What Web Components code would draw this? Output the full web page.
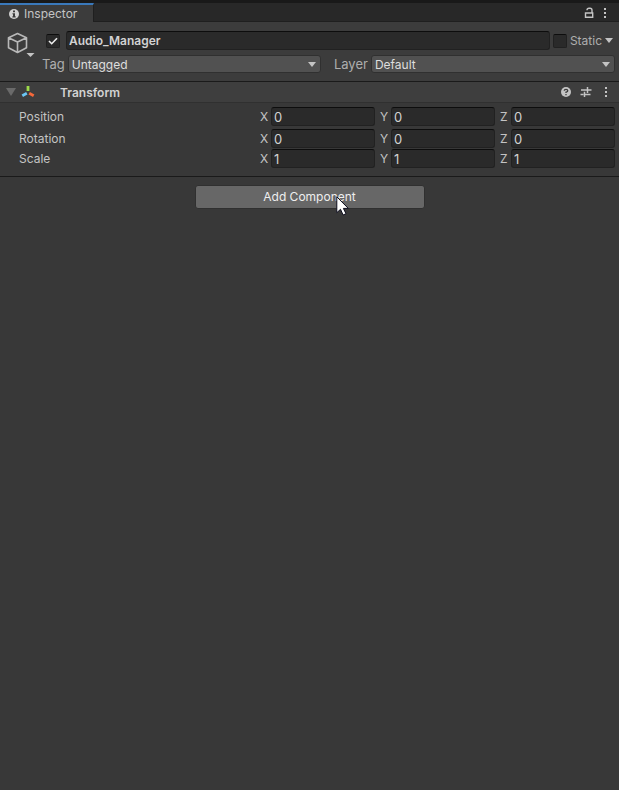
<!DOCTYPE html>
<html lang="en">
<head>
<meta charset="utf-8">
<meta name="viewport" content="width=device-width, initial-scale=1">
<title>Inspector</title>
<style>
    body {
        margin: 0;
        min-height: 100vh;
        background: #383838;
        color: #c4c4c4;
        font-family: Inter, "Liberation Sans", sans-serif;
        font-size: 12px;
        line-height: 18px;
    }
</style>
</head>
<body>
<inspector-panel>
    <inspector-tabs slot="tabs">Inspector</inspector-tabs>
    <object-header name="Audio_Manager" tag="Untagged" layer="Default"></object-header>
    <component-section heading="Transform">
        <vector-row x="0" y="0" z="0" spaced>Position</vector-row>
        <vector-row x="0" y="0" z="0">Rotation</vector-row>
        <vector-row x="1" y="1" z="1">Scale</vector-row>
    </component-section>
    <add-button>Add Component</add-button>
</inspector-panel>

<script>
//shared look of the text boxes
const fieldStyle = `
    input[type="text"] {
        box-sizing: border-box;
        flex: 1;
        min-width: 0;
        height: 19px;
        margin: 0;
        padding: 0 2px;
        border: 1px solid #212121;
        border-top-color: #0d0d0d;
        border-radius: 3px;
        outline: none;
        background: #2a2a2a;
        color: #d2d2d2;
        font: inherit;
    }
`;

const iconButtonStyle = `
    button {
        display: block;
        margin: 0;
        padding: 0;
        border: 0;
        background: none;
        color: inherit;
    }
    svg { display: block; }
`;

const moreIcon = `
    <svg width="4" height="12" viewBox="0 0 4 12" fill="#c4c4c4">
        <rect x="1" y="1" width="2" height="2"/><rect x="1" y="5" width="2" height="2"/><rect x="1" y="9" width="2" height="2"/>
    </svg>
`;

//THE WHOLE PANEL
class InspectorPanel extends HTMLElement {
    constructor() {
        super();
        this.attachShadow({ mode: "open" }).innerHTML = `
            <slot name="tabs"></slot>
            <main><slot></slot></main>
            <style>
                :host { display: block; }
                main { display: flex; flex-direction: column; }
            </style>
        `;
    }
}
customElements.define("inspector-panel", InspectorPanel);

//TAB BAR
class InspectorTabs extends HTMLElement {
    constructor() {
        super();
        this.attachShadow({ mode: "open" }).innerHTML = `
            <button class="tab">
                <svg width="10" height="10" viewBox="0 0 10 10">
                    <circle cx="5" cy="5" r="5" fill="#d2d2d2"/>
                    <path d="M4 1.5h2v1.7H4zM3.5 4.2H6v3h.7v1.2H3.4V7.2H4V5.3h-.5z" fill="#3c3c3c"/>
                </svg>
                <slot></slot>
            </button>
            <div class="actions">
                <button aria-label="Lock">
                    <svg width="10" height="12" viewBox="0 0 10 12" fill="none" stroke="#c4c4c4" stroke-width="1.4">
                        <path d="M1.5 6h7.2v4.3H1.5zM3 3.2Q3 1.3 5 1.3H6Q8 1.3 8 3.2V6"/>
                    </svg>
                </button>
                <button aria-label="More">${moreIcon}</button>
            </div>
            <style>
                ${iconButtonStyle}
                :host {
                    display: flex;
                    justify-content: space-between;
                    height: 19px;
                    border-top: 3px solid #191919;
                    background: linear-gradient(#282828 18px, #1f1f1f 18px);
                }
                .tab {
                    box-sizing: border-box;
                    display: flex;
                    align-items: center;
                    gap: 5px;
                    height: 19px;
                    padding: 0 16px 0 9px;
                    border-top: 2px solid #3a79bb;
                    border-right: 1px solid #1f1f1f;
                    background: #3c3c3c;
                    font: inherit;
                }
                .actions {
                    display: flex;
                    align-items: center;
                    gap: 9px;
                    padding-right: 12px;
                }
            </style>
        `;
    }
}
customElements.define("inspector-tabs", InspectorTabs);

//NAME, TAG AND LAYER
class ObjectHeader extends HTMLElement {
    connectedCallback() {
        if (this.shadowRoot) return;
        this.attachShadow({ mode: "open" }).innerHTML = `
            <button class="cube" aria-label="Object icon">
                <svg width="28" height="28" viewBox="0 0 28 28">
                    <path d="M10.5 2.5L19.5 6.7V16.8L10.5 21.5L1.5 16.8V6.7ZM1.5 6.7L10.5 11L19.5 6.7M10.5 11V21.5" fill="none" stroke="#b8b8b8" stroke-width="1.6" stroke-linejoin="round"/>
                    <path d="M19.5 22h8l-4 4z" fill="#c4c4c4"/>
                </svg>
            </button>
            <div class="rows">
                <div class="row name">
                    <input type="checkbox" aria-label="Active" checked>
                    <input type="text" aria-label="Name" value="${this.getAttribute("name")}">
                    <input type="checkbox" id="static">
                    <label for="static">Static</label>
                    <button aria-label="Static options"><svg width="8" height="5" viewBox="0 0 8 5"><path d="M0 0h8L4 5z" fill="#c4c4c4"/></svg></button>
                </div>
                <div class="row">
                    <label for="tag">Tag</label>
                    <select id="tag"><option>${this.getAttribute("tag")}</option></select>
                    <label for="layer" class="layer">Layer</label>
                    <select id="layer"><option>${this.getAttribute("layer")}</option></select>
                </div>
            </div>
            <style>
                ${fieldStyle}
                ${iconButtonStyle}
                :host {
                    display: flex;
                    padding: 9px 4px 8px 7px;
                    background: #3c3c3c;
                }
                .cube { align-self: flex-start; width: 35px; }
                .rows {
                    flex: 1;
                    display: flex;
                    flex-direction: column;
                    gap: 5px;
                }
                .row { display: flex; align-items: center; }
                .name { gap: 3px; padding-left: 4px; }
                .name input[type="text"] { margin-left: 3px; font-weight: 600; }
                .name button { margin-right: 2px; }
                label { color: #aeaeae; }
                input[type="checkbox"] {
                    appearance: none;
                    flex: none;
                    box-sizing: border-box;
                    width: 14px;
                    height: 14px;
                    margin: 0;
                    border: 1px solid #212121;
                    border-top-color: #0d0d0d;
                    border-radius: 2px;
                    background: #2a2a2a;
                }
                input[type="checkbox"]:checked {
                    background: #2a2a2a url("data:image/svg+xml,%3Csvg xmlns='http://www.w3.org/2000/svg' viewBox='0 0 12 12'%3E%3Cpath d='M2 6l2.7 2.7L10 3.2' fill='none' stroke='%23eee' stroke-width='1.6'/%3E%3C/svg%3E");
                }
                select {
                    appearance: none;
                    box-sizing: border-box;
                    flex: 254 1 0;
                    min-width: 0;
                    height: 18px;
                    margin: 0 0 0 3px;
                    padding: 0 18px 0 3px;
                    border: 1px solid #303030;
                    border-radius: 3px;
                    outline: none;
                    background: #515151 url("data:image/svg+xml,%3Csvg xmlns='http://www.w3.org/2000/svg' width='8' height='5'%3E%3Cpath d='M0 0h8L4 5z' fill='%23c4c4c4'/%3E%3C/svg%3E") no-repeat right 4px center;
                    color: #dedede;
                    font: inherit;
                }
                .row:last-child label { font-size: 13px; }
                #layer { flex-grow: 244; }
                .layer { margin-left: 13px; }
            </style>
        `;
    }
}
customElements.define("object-header", ObjectHeader);

//FOLDABLE COMPONENT WITH ITS TITLE BAR
class ComponentSection extends HTMLElement {
    connectedCallback() {
        if (this.shadowRoot) return;
        this.attachShadow({ mode: "open" }).innerHTML = `
            <header>
                <button aria-label="Fold"><svg width="10" height="8" viewBox="0 0 10 8"><path d="M0 0h10L5 8z" fill="#6a6a6a"/></svg></button>
                <svg class="axes" width="14" height="14" viewBox="0 0 14 14" fill="none" stroke-width="2.8">
                    <path d="M7 1v5" stroke="#9ddb4a"/>
                    <path d="M5.8 8.2L1.3 10.7" stroke="#6bc7f5"/>
                    <path d="M8.2 8.2L12.7 10.7" stroke="#f5683a"/>
                </svg>
                <h2>${this.getAttribute("heading")}</h2>
                <div class="actions">
                    <button aria-label="Help">
                        <svg width="10" height="10" viewBox="0 0 10 10">
                            <circle cx="5" cy="5" r="5" fill="#c4c4c4"/>
                            <path d="M3.2 3.8Q3.3 2.3 5 2.3T6.8 3.7Q6.8 4.6 5 5.2V6M5 7v1.3" fill="none" stroke="#3c3c3c" stroke-width="1.3"/>
                        </svg>
                    </button>
                    <button aria-label="Presets">
                        <svg width="12" height="10" viewBox="0 0 12 10" fill="none" stroke="#c4c4c4" stroke-width="1.5">
                            <path d="M1 3h6M7.5 0v6M7.5 3H11.5M0.5 7.5h3M4.5 4.8v5.2M4.5 7.5H10.5"/>
                        </svg>
                    </button>
                    <button aria-label="More">${moreIcon}</button>
                </div>
            </header>
            <div class="fields"><slot></slot></div>
            <style>
                ${iconButtonStyle}
                :host {
                    display: block;
                    border-top: 1px solid #1a1a1a;
                    border-bottom: 1px solid #1a1a1a;
                }
                header {
                    display: flex;
                    align-items: center;
                    height: 20px;
                    padding: 0 11px 0 6px;
                    border-bottom: 1px solid #303030;
                    background: #3e3e3e;
                }
                .axes { margin-left: 5px; }
                h2 {
                    flex: 1;
                    margin: 0 0 0 25px;
                    padding-top: 2px;
                    color: #d2d2d2;
                    font-size: 12px;
                    font-weight: 600;
                }
                .actions { display: flex; align-items: center; gap: 9px; }
                .actions button:last-child { margin-left: 3px; }
                .fields {
                    display: flex;
                    flex-direction: column;
                    gap: 2px;
                    padding: 4px 4px 9px 19px;
                }
            </style>
        `;
    }
}
customElements.define("component-section", ComponentSection);

//ONE LABEL WITH X, Y AND Z
class VectorRow extends HTMLElement {
    connectedCallback() {
        if (this.shadowRoot) return;
        const axes = ["x", "y", "z"].map(axis => `
            <div class="axis">
                <label for="${axis}">${axis.toUpperCase()}</label>
                <input type="text" id="${axis}" value="${this.getAttribute(axis)}">
            </div>
        `).join("");
        this.attachShadow({ mode: "open" }).innerHTML = `
            <span><slot></slot></span>
            <div class="axes">${axes}</div>
            <style>
                ${fieldStyle}
                :host {
                    display: grid;
                    grid-template-columns: 241px minmax(0, 1fr);
                    align-items: center;
                    height: 18px;
                }
                :host([spaced]) { margin-bottom: 2px; }
                .axes {
                    display: grid;
                    grid-template-columns: repeat(3, minmax(0, 1fr));
                    gap: 5px;
                }
                .axis { display: flex; align-items: center; }
                .axis label { width: 11px; }
                .axis input[type="text"] { font-size: 13px; }
            </style>
        `;
    }
}
customElements.define("vector-row", VectorRow);

//ADD COMPONENT, WITH THE POINTER OVER IT
class AddButton extends HTMLElement {
    constructor() {
        super();
        this.attachShadow({ mode: "open" }).innerHTML = `
            <button><slot></slot></button>
            <svg width="13" height="20" viewBox="0 0 13 20">
                <path d="M.8 .8v15.9l3.7-3.4 2.6 5.7 2.9-1.3-2.6-5.3h4.9z" fill="#fff" stroke="#0c0c1c" stroke-width="1"/>
            </svg>
            <style>
                :host {
                    position: relative;
                    align-self: center;
                    display: block;
                    padding-top: 8px;
                }
                button {
                    box-sizing: border-box;
                    display: block;
                    width: 230px;
                    height: 24px;
                    margin: 0;
                    padding: 0;
                    border: 1px solid #303030;
                    border-radius: 3px;
                    background: #676767;
                    color: #eee;
                    font: inherit;
                }
                svg { position: absolute; left: 141px; top: 19px; }
            </style>
        `;
    }
}
customElements.define("add-button", AddButton);
</script>
</body>
</html>
